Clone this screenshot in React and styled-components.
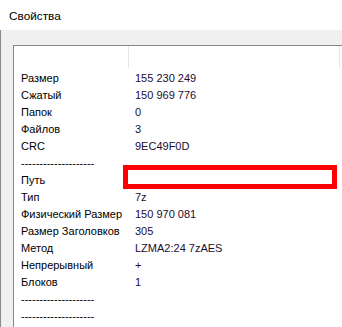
import React from "react";
import styled, { createGlobalStyle } from "styled-components";

const dashes = "--------------------";

const rows = [
  { label: "Размер", value: "155 230 249" },
  { label: "Сжатый", value: "150 969 776" },
  { label: "Папок", value: "0" },
  { label: "Файлов", value: "3" },
  { label: "CRC", value: "9EC49F0D" },
  { label: dashes, value: "" },
  { label: "Путь", value: "", marked: true },
  { label: "Тип", value: "7z" },
  { label: "Физический Размер", value: "150 970 081" },
  { label: "Размер Заголовков", value: "305" },
  { label: "Метод", value: "LZMA2:24 7zAES" },
  { label: "Непрерывный", value: "+" },
  { label: "Блоков", value: "1" },
  { label: dashes, value: "" },
  { label: dashes, value: "" },
];

const App = () => {
  return (
    <>
      <GlobalStyle />
      <Window>
        <TitleBar>Свойства</TitleBar>
        <Body>
          <ListView>
            <Header>
              <HeaderCell $width="114px" />
              <HeaderCell $width="210px" />
            </Header>
            {rows.map((row, index) => (
              <Row key={index}>
                <Label>{row.label}</Label>
                <Value>{row.value}</Value>
                {row.marked && <Highlight />}
              </Row>
            ))}
          </ListView>
        </Body>
      </Window>
    </>
  );
};

export default App;

const GlobalStyle = createGlobalStyle`
  html, body {
    margin: 0;
    padding: 0;
    background: #ffffff;
    overflow: hidden;
  }
`;

const Window = styled.div`
  width: 342px;
  height: 327px;
  display: flex;
  flex-direction: column;
  font-family: "Liberation Sans", Arial, sans-serif;
  overflow: hidden;
`;

const TitleBar = styled.div`
  height: 30px;
  flex-shrink: 0;
  display: flex;
  align-items: center;
  padding-left: 9px;
  padding-top: 1px;
  box-sizing: border-box;
  background: #ffffff;
  color: #000000;
  font-size: 11.8px;
`;

const Body = styled.div`
  flex: 1;
  background: #f0f0f0;
  border-left: 1px solid #8a8a8a;
  padding: 15px 0 0 12px;
  display: flex;
  flex-direction: column;
`;

const ListView = styled.div`
  flex: 1;
  background: #ffffff;
  border-top: 1px solid #828790;
  border-left: 1px solid #828790;
  display: flex;
  flex-direction: column;
`;

const Header = styled.div`
  height: 24px;
  flex-shrink: 0;
  display: flex;
`;

const HeaderCell = styled.div`
  width: ${(p) => p.$width};
  height: 22px;
  border-right: 1px solid #e5e5e5;
`;

const Row = styled.div`
  position: relative;
  height: 17px;
  display: grid;
  grid-template-columns: 115px 1fr;
  align-items: center;
  font-size: 11px;
  line-height: 17px;
`;

const Label = styled.div`
  padding-left: 7px;
  color: #000000;
  white-space: nowrap;
`;

const Value = styled.div`
  padding-left: 6px;
  color: #1c0c30;
  white-space: nowrap;
`;

const Highlight = styled.div`
  position: absolute;
  left: 109px;
  top: -7px;
  width: 214px;
  height: 24px;
  box-sizing: border-box;
  border: 5px solid #ff0000;
`;
